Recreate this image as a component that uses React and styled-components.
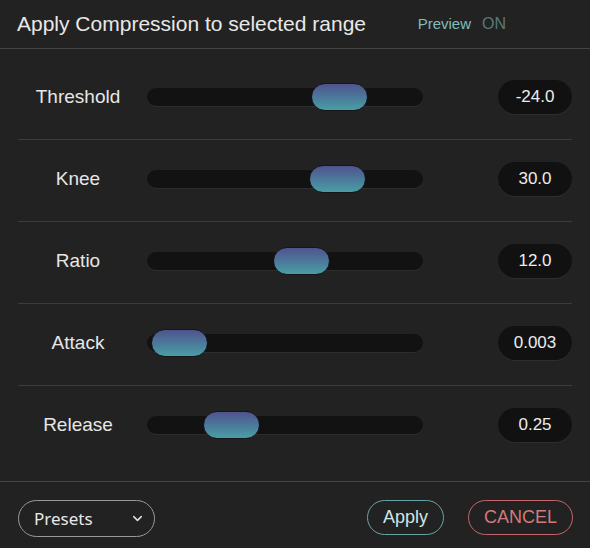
import styled, { createGlobalStyle } from 'styled-components';
import { ChevronDown } from 'lucide-react';

const params = [
  { label: 'Threshold', value: '-24.0', pos: 0.749 },
  { label: 'Knee', value: '30.0', pos: 0.74 },
  { label: 'Ratio', value: '12.0', pos: 0.575 },
  { label: 'Attack', value: '0.003', pos: 0.018 },
  { label: 'Release', value: '0.25', pos: 0.256 },
];

const App = () => {
  return (
    <>
      <GlobalStyle />
      <StPanel>
        <StHeader>
          <StTitle>Apply Compression to selected range</StTitle>
          <StPreview>
            <span>Preview</span>
            <StOn>ON</StOn>
          </StPreview>
        </StHeader>

        <StList>
          {params.map((p) => (
            <StRow key={p.label}>
              <StLabel>{p.label}</StLabel>
              <StTrack>
                <StThumb style={{ left: `calc((100% - 57px) * ${p.pos})` }} />
              </StTrack>
              <StValue>{p.value}</StValue>
            </StRow>
          ))}
        </StList>

        <StFooter>
          <StSelect>
            Presets
            <ChevronDown size={15} strokeWidth={2.4} />
          </StSelect>
          <StActions>
            <StButton $tone="apply">Apply</StButton>
            <StButton $tone="cancel">CANCEL</StButton>
          </StActions>
        </StFooter>
      </StPanel>
    </>
  );
};

export default App;

const GlobalStyle = createGlobalStyle`
  body {
    margin: 0;
    background: #222222;
    font-family: "Liberation Sans", Arial, sans-serif;
  }
`;

const StPanel = styled.div`
  width: 590px;
  height: 548px;
  background: #222222;
  display: flex;
  flex-direction: column;
`;

const StHeader = styled.div`
  height: 48px;
  display: flex;
  align-items: center;
  justify-content: space-between;
  padding: 0 84px 0 17px;
  border-bottom: 1px solid #444444;
`;

const StTitle = styled.div`
  font-size: 21px;
  color: #e8e8e8;
`;

const StPreview = styled.div`
  display: flex;
  align-items: baseline;
  gap: 11px;
  font-size: 15px;
  color: #7fbcbe;
`;

const StOn = styled.span`
  font-size: 16px;
  color: #587a78;
`;

const StList = styled.div`
  padding: 9px 18px 14px;
`;

const StRow = styled.div`
  height: 82px;
  box-sizing: border-box;
  padding-bottom: 3px;
  display: grid;
  grid-template-columns: 120px 276px 1fr;
  column-gap: 9px;
  align-items: center;
  border-bottom: 1px solid #3c3c3c;

  &:last-child {
    height: 81px;
    border-bottom: none;
  }
`;

const StLabel = styled.div`
  text-align: center;
  font-size: 19px;
  color: #e6e6e6;
`;

const StTrack = styled.div`
  position: relative;
  height: 18px;
  border-radius: 9px;
  background: #121212;
  box-shadow: 0 1px 0 #2c2c31;
`;

const StThumb = styled.div`
  position: absolute;
  top: -5px;
  width: 57px;
  height: 28px;
  box-sizing: border-box;
  border-radius: 14px;
  border: 1px solid #15151c;
  background: linear-gradient(180deg, #50538e 0%, #4b7c9c 55%, #4a9ea4 100%);
`;

const StValue = styled.div`
  justify-self: end;
  width: 74px;
  height: 34px;
  border-radius: 17px;
  background: #111111;
  box-shadow: 0 1px 0 #2e2e2e;
  display: flex;
  align-items: center;
  justify-content: center;
  font-size: 17px;
  color: #ececec;
`;

const StFooter = styled.div`
  flex: 1;
  border-top: 1px solid #444444;
  display: flex;
  align-items: flex-start;
  justify-content: space-between;
  padding: 18px 17px 0 18px;
`;

const StSelect = styled.div`
  width: 137px;
  height: 37px;
  box-sizing: border-box;
  border: 1px solid #9a9a9a;
  border-radius: 19px;
  display: flex;
  align-items: center;
  justify-content: space-between;
  padding: 0 9px 0 15px;
  font-family: "Noto Sans", "Open Sans", sans-serif;
  font-size: 17px;
  color: #e8e8e8;

  svg {
    color: #e0e0e0;
  }
`;

const StActions = styled.div`
  display: flex;
  gap: 24px;
`;

const StButton = styled.div`
  height: 35px;
  box-sizing: border-box;
  padding: 0 15px;
  border-radius: 18px;
  border: 1px solid ${(p) => (p.$tone === 'apply' ? '#6aa3a6' : '#c4666a')};
  color: ${(p) => (p.$tone === 'apply' ? '#cfe6e6' : '#d27a7c')};
  display: flex;
  align-items: center;
  font-size: 18px;
`;
